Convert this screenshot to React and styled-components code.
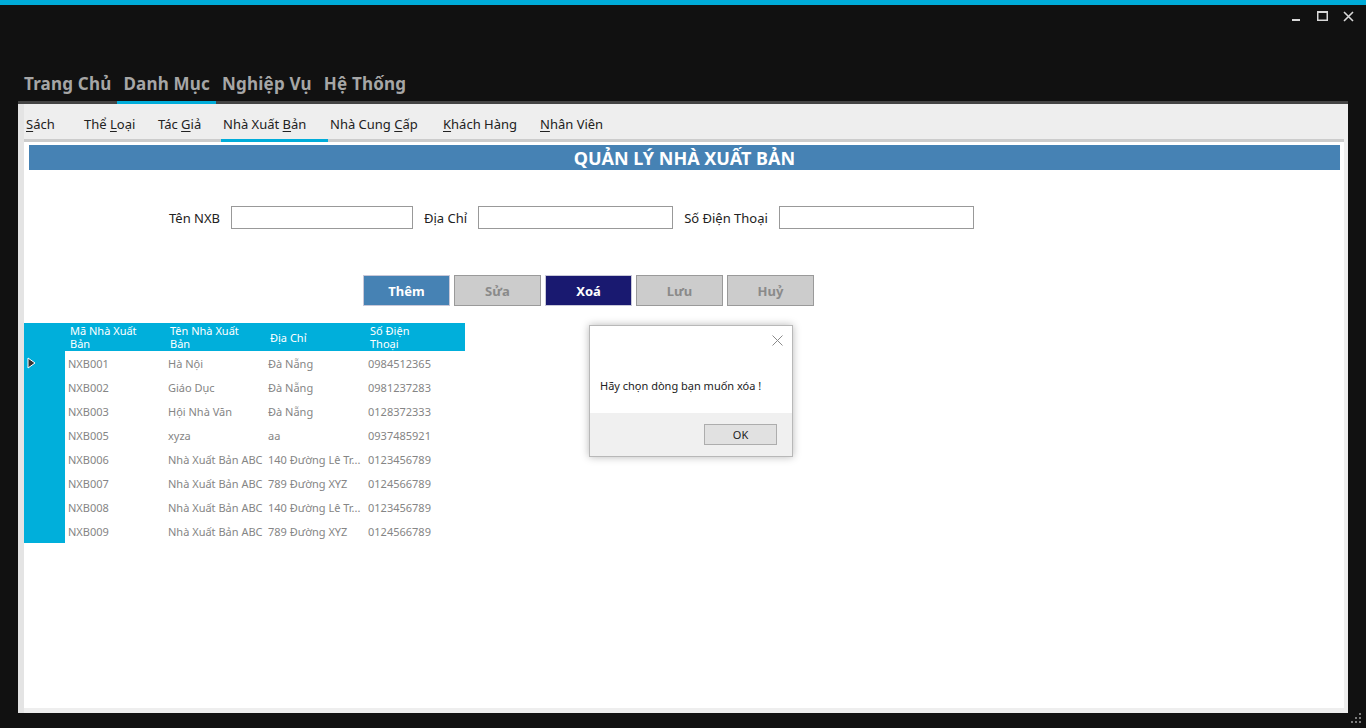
import React from "react";
import styled, { createGlobalStyle } from "styled-components";

const GlobalStyle = createGlobalStyle`
  html, body {
    margin: 0;
    padding: 0;
    background: #111111;
    font-family: "Noto Sans", "Open Sans", sans-serif;
  }
`;

const Screen = styled.div`
  width: 1366px;
  height: 728px;
  background: #111111;
  display: flex;
  flex-direction: column;
  overflow: hidden;
`;

const AccentStrip = styled.div`
  height: 5px;
  flex-shrink: 0;
  background: #00acd9;
`;

const TitleRow = styled.div`
  height: 60px;
  box-sizing: border-box;
  flex-shrink: 0;
  display: flex;
  justify-content: flex-end;
  align-items: flex-start;
  padding: 5px 12px 0 0;
  gap: 14px;
`;

const CtrlBtn = styled.div`
  width: 12px;
  height: 12px;
  display: flex;
  align-items: center;
  justify-content: center;
`;

const MenuBar = styled.div`
  margin: 0 18px;
  height: 36px;
  flex-shrink: 0;
  display: flex;
  border-bottom: 3px solid #444444;
`;

const MenuItem = styled.div`
  padding: 0 6px;
  display: flex;
  align-items: center;
  font-size: 17px;
  font-weight: 700;
  letter-spacing: 0.2px;
  color: #a6a6a6;
  margin-bottom: -3px;
  border-bottom: 3px solid ${(p) => (p.active ? "#00acd9" : "transparent")};
`;

const Panel = styled.div`
  margin: 0 18px;
  height: 609px;
  flex-shrink: 0;
  background: #eeeeee;
  border-left: 6px solid #e4e4e4;
  padding: 0 4px 5px 0;
  display: flex;
  flex-direction: column;
  box-sizing: border-box;
`;

const TabStrip = styled.div`
  height: 35px;
  display: flex;
  border-bottom: 3px solid #cccccc;
  flex-shrink: 0;
`;

const Tab = styled.div`
  width: ${(p) => p.w}px;
  box-sizing: border-box;
  flex-shrink: 0;
  padding: 4px 0 0 2px;
  display: flex;
  align-items: center;
  font-size: 13px;
  color: #222222;
  margin-bottom: -3px;
  border-bottom: 3px solid ${(p) => (p.active ? "#00acd9" : "transparent")};
  white-space: pre;
  u {
    text-decoration: underline;
    text-underline-offset: 2px;
  }
`;

const Content = styled.div`
  flex: 1;
  background: #ffffff;
  position: relative;
  display: flex;
  flex-direction: column;
`;

const Heading = styled.div`
  margin: 3px 4px 0 5px;
  height: 25px;
  background: #4682b4;
  color: #ffffff;
  font-size: 18px;
  font-weight: 700;
  display: flex;
  align-items: center;
  justify-content: center;
`;

const FormRow = styled.div`
  margin-top: 36px;
  padding-left: 145px;
  display: flex;
  align-items: center;
  height: 23px;
`;

const Label = styled.label`
  font-size: 13px;
  color: #222222;
  margin-right: 11px;
  white-space: nowrap;
`;

const Field = styled.input`
  width: ${(p) => p.w}px;
  height: 23px;
  box-sizing: border-box;
  border: 1px solid #999999;
  margin-right: 11px;
  padding: 0 3px;
  font-size: 13px;
`;

const ButtonRow = styled.div`
  margin-top: 46px;
  padding-left: 339px;
  display: flex;
  gap: 4px;
`;

const ActionButton = styled.button`
  width: 87px;
  height: 31px;
  box-sizing: border-box;
  border: 1px solid ${(p) => (p.tone === "muted" ? "#9a9a9a" : "#c8c8d8")};
  background: ${(p) =>
    p.tone === "primary" ? "#4682b4" : p.tone === "danger" ? "#191970" : "#cccccc"};
  color: ${(p) => (p.tone === "muted" ? "#8a8a8a" : "#ffffff")};
  font-family: "Noto Sans", sans-serif;
  font-weight: 700;
  font-size: 13px;
  padding: 0;
`;

const Grid = styled.div`
  margin-top: 17px;
  width: 441px;
  display: grid;
  grid-template-columns: 41px repeat(4, 100px);
  font-size: 11px;
`;

const HeadCell = styled.div`
  height: 28px;
  background: #00afdb;
  color: #ffffff;
  padding-left: 5px;
  display: flex;
  align-items: center;
  line-height: 13px;
  box-sizing: border-box;
`;

const RowHead = styled.div`
  height: 24px;
  background: #00afdb;
  display: flex;
  align-items: center;
  padding-left: 3px;
`;

const Cell = styled.div`
  height: 24px;
  padding-left: 3px;
  display: flex;
  align-items: center;
  color: #858585;
  white-space: nowrap;
  overflow: hidden;
`;

const Dialog = styled.div`
  position: absolute;
  left: 565px;
  top: 183px;
  width: 204px;
  height: 132px;
  box-sizing: border-box;
  border: 1px solid #b8b8b8;
  box-shadow: 0 0 8px rgba(0, 0, 0, 0.28);
  background: #ffffff;
  display: flex;
  flex-direction: column;
`;

const DialogBody = styled.div`
  flex: 1;
  position: relative;
  padding: 32px 10px 0;
  display: flex;
  align-items: center;
  font-size: 11px;
  color: #222222;
`;

const CloseX = styled.div`
  position: absolute;
  right: 9px;
  top: 8px;
`;

const DialogFoot = styled.div`
  height: 43px;
  background: #f0f0f0;
  display: flex;
  justify-content: flex-end;
  align-items: center;
  padding-right: 15px;
`;

const OkButton = styled.button`
  width: 73px;
  height: 21px;
  border: 1px solid #adadad;
  background: #e1e1e1;
  font-family: "Noto Sans", sans-serif;
  font-size: 11px;
  color: #222222;
  padding: 0;
`;

const FootRow = styled.div`
  flex: 1;
  display: flex;
  justify-content: flex-end;
  align-items: flex-end;
  padding: 0 4px 4px 0;
`;

const tabs = [
  { w: 58, pre: "", u: "S", post: "ách" },
  { w: 74, pre: "Thể ", u: "L", post: "oại" },
  { w: 65, pre: "Tác ", u: "G", post: "iả" },
  { w: 107, pre: "Nhà Xuất ", u: "B", post: "ản", active: true },
  { w: 113, pre: "Nhà Cung ", u: "C", post: "ấp" },
  { w: 97, pre: "", u: "K", post: "hách Hàng" },
  { w: 90, pre: "", u: "N", post: "hân Viên" },
];

const rows = [
  ["NXB001", "Hà Nội", "Đà Nẵng", "0984512365"],
  ["NXB002", "Giáo Dục", "Đà Nẵng", "0981237283"],
  ["NXB003", "Hội Nhà Văn", "Đà Nẵng", "0128372333"],
  ["NXB005", "xyza", "aa", "0937485921"],
  ["NXB006", "Nhà Xuất Bản ABC", "140 Đường Lê Tr...", "0123456789"],
  ["NXB007", "Nhà Xuất Bản ABC", "789 Đường XYZ", "0124566789"],
  ["NXB008", "Nhà Xuất Bản ABC", "140 Đường Lê Tr...", "0123456789"],
  ["NXB009", "Nhà Xuất Bản ABC", "789 Đường XYZ", "0124566789"],
];

const Grip = () => (
  <svg width="11" height="11" viewBox="0 0 11 11">
    {[
      [8, 0],
      [4, 4],
      [8, 4],
      [0, 8],
      [4, 8],
      [8, 8],
    ].map(([x, y]) => (
      <rect key={x + "-" + y} x={x} y={y} width="2" height="2" fill="#7a7a7a" />
    ))}
  </svg>
);

const App = () => {
  return (
    <>
      <GlobalStyle />
      <Screen>
        <AccentStrip />
        <TitleRow>
          <CtrlBtn>
            <svg width="10" height="12" viewBox="0 0 10 12">
              <rect x="1" y="9" width="8" height="2" fill="#d8d8d8" />
            </svg>
          </CtrlBtn>
          <CtrlBtn>
            <svg width="11" height="11" viewBox="0 0 11 11">
              <rect x="0.75" y="0.75" width="9.5" height="8.5" fill="none" stroke="#d8d8d8" strokeWidth="1.5" />
              <rect x="0" y="0" width="11" height="2" fill="#d8d8d8" />
            </svg>
          </CtrlBtn>
          <CtrlBtn>
            <svg width="11" height="11" viewBox="0 0 11 11">
              <path d="M1 1 L10 10 M10 1 L1 10" stroke="#d8d8d8" strokeWidth="1.6" />
            </svg>
          </CtrlBtn>
        </TitleRow>
        <MenuBar>
          <MenuItem>Trang Chủ</MenuItem>
          <MenuItem active>Danh Mục</MenuItem>
          <MenuItem>Nghiệp Vụ</MenuItem>
          <MenuItem>Hệ Thống</MenuItem>
        </MenuBar>
        <Panel>
          <TabStrip>
            {tabs.map((t) => (
              <Tab key={t.u + t.post} w={t.w} active={t.active}>
                <span>
                  {t.pre}
                  <u>{t.u}</u>
                  {t.post}
                </span>
              </Tab>
            ))}
          </TabStrip>
          <Content>
            <Heading>QUẢN LÝ NHÀ XUẤT BẢN</Heading>
            <FormRow>
              <Label>Tên NXB</Label>
              <Field w={182} />
              <Label>Địa Chỉ</Label>
              <Field w={195} />
              <Label>Số Điện Thoại</Label>
              <Field w={195} />
            </FormRow>
            <ButtonRow>
              <ActionButton tone="primary">Thêm</ActionButton>
              <ActionButton tone="muted">Sửa</ActionButton>
              <ActionButton tone="danger">Xoá</ActionButton>
              <ActionButton tone="muted">Lưu</ActionButton>
              <ActionButton tone="muted">Huỷ</ActionButton>
            </ButtonRow>
            <Grid>
              <HeadCell />
              <HeadCell>Mã Nhà Xuất<br />Bản</HeadCell>
              <HeadCell>Tên Nhà Xuất<br />Bản</HeadCell>
              <HeadCell>Địa Chỉ</HeadCell>
              <HeadCell>Số Điện<br />Thoại</HeadCell>
              {rows.map((r, i) => (
                <React.Fragment key={r[0]}>
                  <RowHead>
                    {i === 0 && (
                      <svg width="9" height="12" viewBox="0 0 9 12">
                        <path d="M1 1 L8 6 L1 11 Z" fill="#333333" stroke="#ffffff" strokeWidth="1" />
                      </svg>
                    )}
                  </RowHead>
                  {r.map((c, j) => (
                    <Cell key={j}>{c}</Cell>
                  ))}
                </React.Fragment>
              ))}
            </Grid>
            <Dialog>
              <DialogBody>
                <CloseX>
                  <svg width="11" height="11" viewBox="0 0 11 11">
                    <path d="M0.5 0.5 L10.5 10.5 M10.5 0.5 L0.5 10.5" stroke="#8a8a8a" strokeWidth="1" />
                  </svg>
                </CloseX>
                Hãy chọn dòng bạn muốn xóa !
              </DialogBody>
              <DialogFoot>
                <OkButton>OK</OkButton>
              </DialogFoot>
            </Dialog>
          </Content>
        </Panel>
        <FootRow>
          <Grip />
        </FootRow>
      </Screen>
    </>
  );
};

export default App;
